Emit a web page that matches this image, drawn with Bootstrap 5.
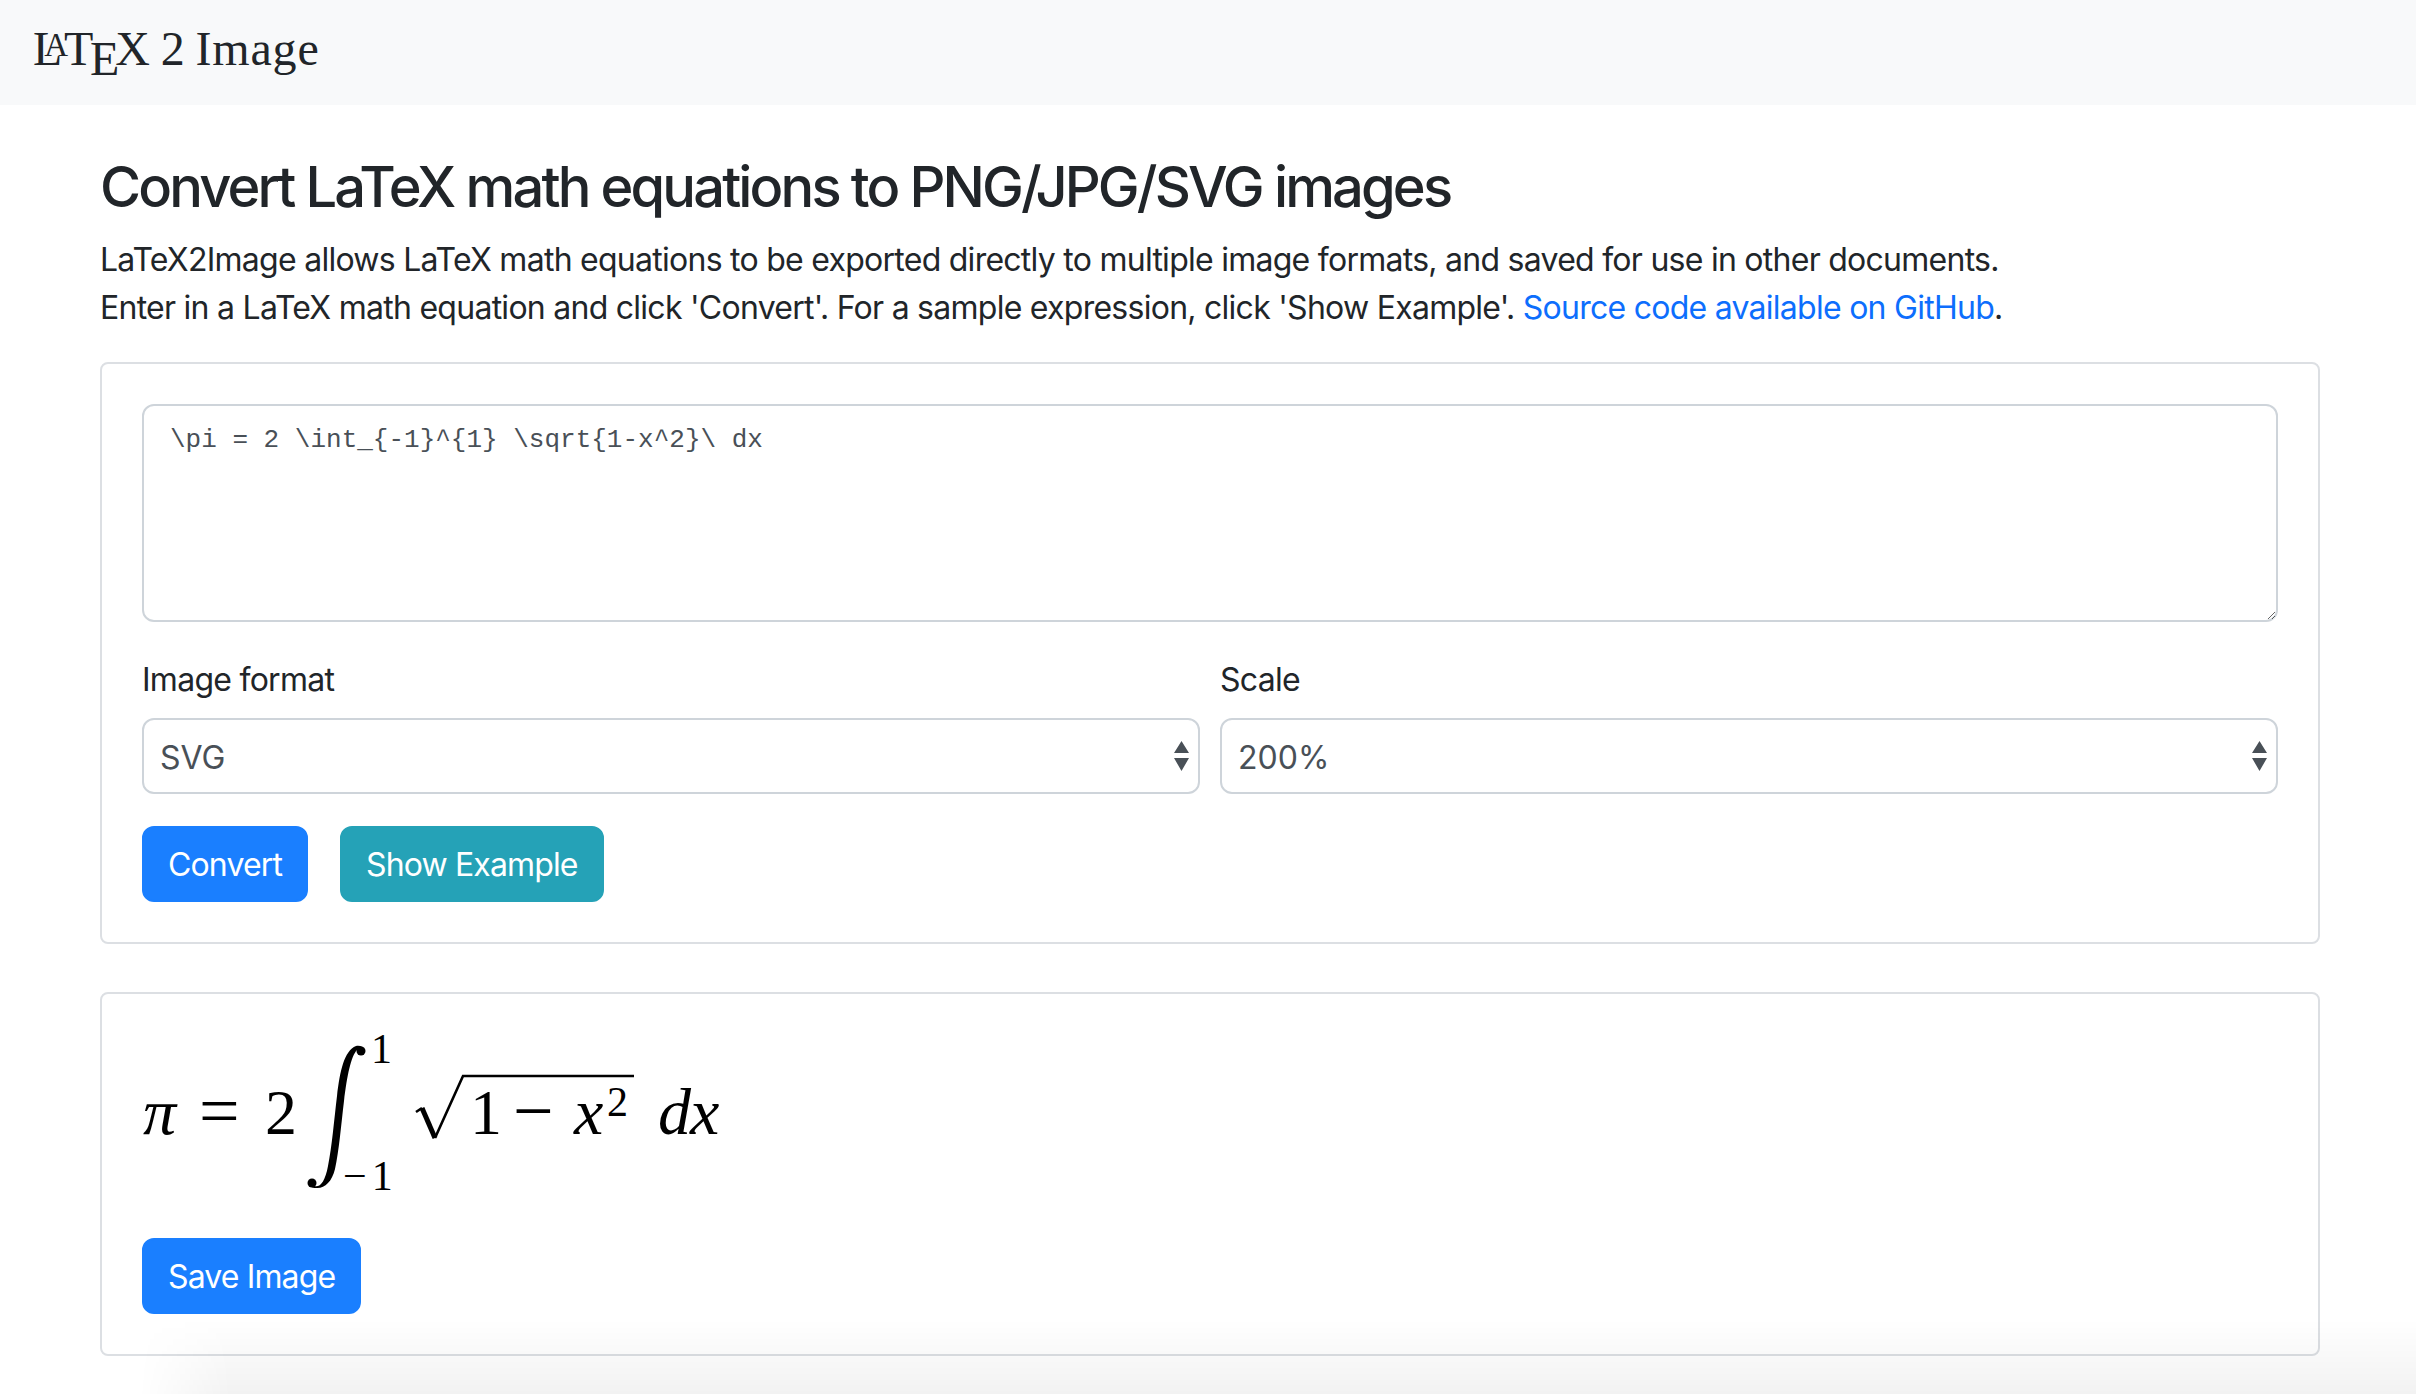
<!DOCTYPE html>
<html lang="en">
<head>
  <meta charset="UTF-8">
  <title>LaTeX 2 Image</title>
  <meta name="viewport" content="width=device-width, initial-scale=1">
  <link href="https://cdn.jsdelivr.net/npm/bootstrap@5.3.0/dist/css/bootstrap.min.css" rel="stylesheet">
  <style>
    /* the screenshot is a 2x capture of a page, so the whole rem scale is doubled */
    :root {
      font-size: 32px;
      --bs-body-font-family: Inter, "Liberation Sans", sans-serif;
      --bs-border-width: 2px;
      --bs-border-radius: .25rem;
      --bs-border-color: #ced4da;
      --bs-link-color: #1a7fff;
    }
    body { letter-spacing: -0.023em; overflow: hidden; position: relative; min-height: 1394px; }
    .top-bar { height: 105px; padding: 0 33px 7px; }
    .brand-logo { font-family: "Liberation Serif", serif; font-size: 48px; line-height: 1; letter-spacing: .018em; word-spacing: -3px; color: #212529; padding: 0; margin: 0; }
    .brand-logo .tex-a { font-size: 33px; position: relative; top: -9px; margin-left: -19px; margin-right: -5px; }
    .brand-logo .tex-e { position: relative; top: 10px; margin-left: -4px; margin-right: -5px; }
    .page-wrap { padding: 48px 96px 0 100px; }
    .page-title { font-size: 56px; font-weight: 500; letter-spacing: -0.051em; padding-top: 1px; margin-bottom: 15px; }
    .intro-text { margin-bottom: 30px; }
    .box-card { border-color: #dcdfe3; }
    .box-card .card-body { padding: 40px; }
    .eq-input { height: 218px; font-family: "Liberation Mono", monospace; font-size: 26px; letter-spacing: 0; color: #495057; padding: 15px 26px 9px; }
    .sel-row { gap: 20px; }
    .sel-row .form-label { padding-top: 2px; margin-bottom: 14px; }
    .fmt-select {
      color: #495057;
      padding-left: 16px;
      padding-top: 14px;
      padding-bottom: 10px;
      height: 76px;
      background-image: url("data:image/svg+xml,%3Csvg xmlns='http://www.w3.org/2000/svg' width='15' height='30'%3E%3Cpath fill='%23495057' d='M7.5 0 15 12H0zM0 17h15l-7.5 13z'/%3E%3C/svg%3E");
      background-size: 15px 30px;
      background-position: right 9px center;
    }
    .btn { letter-spacing: -0.027em; padding-top: 13px; padding-bottom: 11px; }
    .btn-go { --bs-btn-bg: #1a7fff; --bs-btn-border-color: #1a7fff; --bs-btn-hover-bg: #0a6fe8; --bs-btn-hover-border-color: #0a6fe8; }
    .btn-eg { --bs-btn-color: #fff; --bs-btn-bg: #25a2b7; --bs-btn-border-color: #25a2b7; --bs-btn-hover-color: #fff; --bs-btn-hover-bg: #1d8a9c; --bs-btn-hover-border-color: #1d8a9c; }
    .eq-pic { display: block; margin-bottom: 32px; }
    .eq-pic text { font-family: "Liberation Serif", serif; fill: #000; letter-spacing: 0; }
    .eq-pic .it { font-style: italic; }
    .win-shadow {
      position: absolute; left: 139px; right: 0; bottom: 0; height: 75px; pointer-events: none;
      background: linear-gradient(to top, rgba(0,0,0,.05), rgba(0,0,0,0));
      -webkit-mask-image: linear-gradient(to right, transparent, #000 92px);
      mask-image: linear-gradient(to right, transparent, #000 92px);
    }
  </style>
</head>
<body>
  <nav class="navbar bg-light top-bar">
    <span class="navbar-brand brand-logo">L<span class="tex-a">A</span>T<span class="tex-e">E</span>X 2 Image</span>
  </nav>

  <div class="page-wrap">
    <h3 class="page-title">Convert LaTeX math equations to PNG/JPG/SVG images</h3>
    <p class="intro-text">LaTeX2Image allows LaTeX math equations to be exported directly to multiple image formats, and saved for use in other documents.<br>
    Enter in a LaTeX math equation and click 'Convert'. For a sample expression, click 'Show Example'. <a href="#" class="text-decoration-none">Source code available on GitHub</a>.</p>

    <!-- Input -->
    <div class="card box-card mb-4">
      <div class="card-body">
        <textarea class="form-control eq-input mb-3">\pi = 2 \int_{-1}^{1} \sqrt{1-x^2}\ dx</textarea>
        <div class="row g-0 flex-nowrap mb-3 sel-row">
          <div class="col">
            <label class="form-label" for="fmt">Image format</label>
            <select id="fmt" class="form-select fmt-select">
              <option>SVG</option>
              <option>PNG</option>
              <option>JPG</option>
            </select>
          </div>
          <div class="col">
            <label class="form-label" for="scale">Scale</label>
            <select id="scale" class="form-select fmt-select">
              <option>200%</option>
              <option>100%</option>
              <option>300%</option>
            </select>
          </div>
        </div>
        <div class="d-flex gap-3">
          <button class="btn btn-primary btn-go">Convert</button>
          <button class="btn btn-eg">Show Example</button>
        </div>
      </div>
    </div>

    <!-- Output -->
    <div class="card box-card">
      <div class="card-body">
        <svg class="eq-pic" width="600" height="172" viewBox="0 -2 600 172" role="img" aria-label="pi = 2 integral">
          <text class="it" x="1" y="98" font-size="66">π</text>
          <text x="57" y="99" font-size="72">=</text>
          <text x="123" y="98" font-size="64">2</text>
          <path d="M172 150C178 152 183 146 186 130 190 110 192 85 195 60 198 35 202 15 214 10 218 9 222 11 223 14 221 11 217 12 215 14 209 20 205 40 202 65 199 90 197 115 193 133 190 146 182 153 174 152 170 152 167 150 166 146z"/>
          <circle cx="219" cy="15" r="4.5"/>
          <circle cx="170" cy="147" r="4.5"/>
          <text x="229" y="27" font-size="42">1</text>
          <text x="201" y="154" font-size="42">−<tspan dx="5">1</tspan></text>
          <path d="M280 72l13 30" fill="none" stroke="#000" stroke-width="5"/>
          <path d="M274 76l6-4M293 102l28-62h171" fill="none" stroke="#000" stroke-width="2.6"/>
          <text x="328" y="98" font-size="64">1</text>
          <text x="371" y="99" font-size="72">−</text>
          <text class="it" x="432" y="98" font-size="66">x</text>
          <text x="465" y="80" font-size="42">2</text>
          <text class="it" x="516" y="98" font-size="66">d</text>
          <text class="it" x="548" y="98" font-size="66">x</text>
        </svg>
        <button class="btn btn-primary btn-go">Save Image</button>
      </div>
    </div>
  </div>

  <div class="win-shadow"></div>
  <script src="https://cdn.jsdelivr.net/npm/bootstrap@5.3.0/dist/js/bootstrap.bundle.min.js"></script>
</body>
</html>
